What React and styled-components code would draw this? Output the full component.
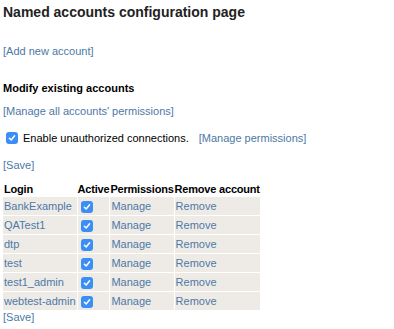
import React from 'react';
import styled, { createGlobalStyle } from 'styled-components';

const GlobalStyle = createGlobalStyle`
  body {
    margin: 0;
    background: #fff;
    font-family: "Liberation Sans", Arial, sans-serif;
    font-size: 11px;
    color: #000;
  }
`;

export const Page = styled.div`
  padding: 4px 3px 0 3px;
`;

export const Title = styled.h1`
  margin: 0;
  font-size: 14px;
  line-height: 16px;
  font-weight: bold;
  color: #222;
`;

export const Block = styled.div`
  margin-top: ${props => props.gap || 0}px;
  line-height: 13px;
`;

export const SectionTitle = styled.h2`
  margin: 24px 0 0;
  font-size: 11px;
  line-height: 13px;
  font-weight: bold;
`;

export const Link = styled.a`
  color: #4d79a6;
  text-decoration: none;
  cursor: pointer;
`;

export const OptionRow = styled.div`
  display: flex;
  align-items: center;
  margin-top: 13px;
  height: 14px;
  padding-left: 3px;
`;

export const OptionLabel = styled.span`
  margin-left: 5px;
  margin-right: 10px;
`;

export const Box = styled.span`
  display: inline-flex;
  align-items: center;
  justify-content: center;
  width: 12px;
  height: 12px;
  border-radius: 3px;
  background: #3a8ef5;
  vertical-align: middle;
  margin-left: ${props => props.inset || 0}px;
`;

export const Table = styled.table`
  margin-top: 10px;
  margin-left: -1px;
  border-collapse: separate;
  border-spacing: 1px;
  white-space: nowrap;
`;

export const Th = styled.th`
  text-align: left;
  font-weight: bold;
  height: 13px;
  padding: 0 0 0 ${props => props.first ? 1 : 0}px;
  line-height: 13px;
  letter-spacing: -0.2px;
`;

export const Td = styled.td`
  background: #eeebe7;
  height: 18px;
  padding: 0 1px;
  vertical-align: middle;
  line-height: 13px;
  color: ${props => props.link ? '#4d79a6' : '#000'};
`;

const Check = ({ inset }) => (
  <Box inset={inset}>
    <svg width="8" height="8" viewBox="0 0 8 8">
      <path d="M1.4 4.2 L3.2 6 L6.6 1.8" fill="none" stroke="#fff" strokeWidth="1.5" strokeLinecap="round" strokeLinejoin="round" />
    </svg>
  </Box>
);

const accounts = ['BankExample', 'QATest1', 'dtp', 'test', 'test1_admin', 'webtest-admin'];

export default function App() {
  return (
    <>
      <GlobalStyle />
      <Page>
        <Title>Named accounts configuration page</Title>
        <Block gap={25}><Link>[Add new account]</Link></Block>
        <SectionTitle>Modify existing accounts</SectionTitle>
        <Block gap={10}><Link>[Manage all accounts' permissions]</Link></Block>
        <OptionRow>
          <Check />
          <OptionLabel>Enable unauthorized connections.</OptionLabel>
          <Link>[Manage permissions]</Link>
        </OptionRow>
        <Block gap={14}><Link>[Save]</Link></Block>
        <Table>
          <thead>
            <tr>
              <Th first>Login</Th>
              <Th>Active</Th>
              <Th>Permissions</Th>
              <Th>Remove account</Th>
            </tr>
          </thead>
          <tbody>
            {accounts.map(name => (
              <tr key={name}>
                <Td link>{name}</Td>
                <Td><Check inset={2} /></Td>
                <Td link>Manage</Td>
                <Td link>Remove</Td>
              </tr>
            ))}
          </tbody>
        </Table>
        <Block><Link>[Save]</Link></Block>
      </Page>
    </>
  );
}
